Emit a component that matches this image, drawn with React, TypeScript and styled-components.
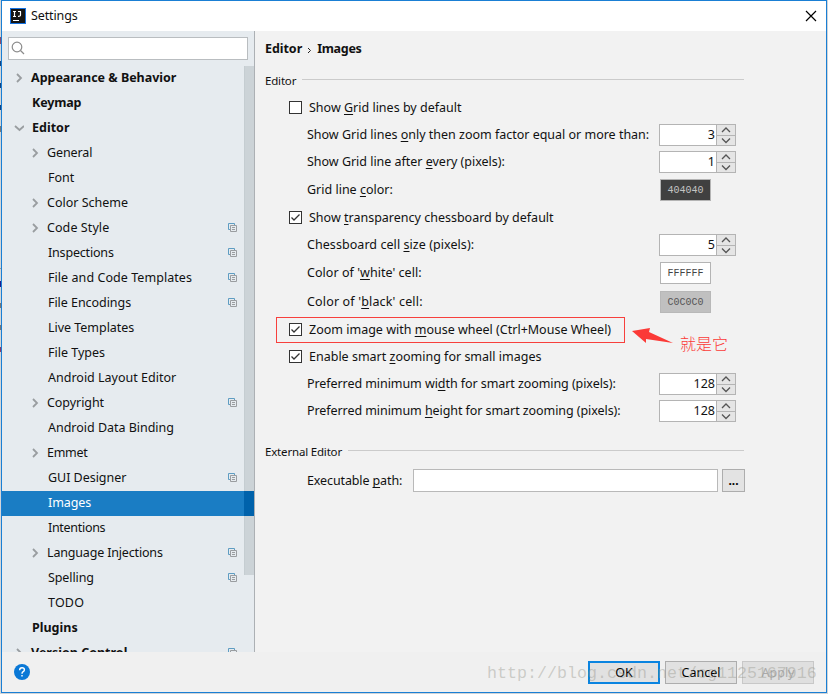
import React from 'react';
import styled, { createGlobalStyle, css } from 'styled-components';

const Global = createGlobalStyle`
  * { box-sizing: border-box; }
  body {
    margin: 0;
    overflow: hidden;
    background: linear-gradient(
      #d4d6d8 37px, #8a4a6a 37px 44px, #d4d6d8 44px 61px,
      #14427e 61px 66px, #d4d6d8 66px 83px, #14427e 83px 88px, #d4d6d8 88px 105px,
      #14427e 105px 110px, #d4d6d8 110px 126px, #777 126px 132px, #d4d6d8 132px 268px,
      #999 268px 269px, #d4d6d8 269px 281px, #1b1b8c 281px 287px, #d4d6d8 287px 303px,
      #777 303px 308px, #d4d6d8 308px 325px, #777 325px 330px, #d4d6d8 330px 347px,
      #8a3a6a 347px 352px, #d4d6d8 352px
    ) 0 0 / 1px 694px no-repeat #d0d4d8;
  }
`;

const Window = styled.div`
  width: 826px;
  height: 693px;
  margin-left: 1px;
  border: 1px solid #1a7fd4;
  background: #f2f2f2;
  display: flex;
  flex-direction: column;
  font: 12.5px/20px 'Noto Sans', 'Noto Sans CJK SC', sans-serif;
  color: #111;
  position: relative;
  white-space: pre;
`;

const TitleBar = styled.header`
  height: 30px;
  flex: none;
  background: #fff;
  display: flex;
  align-items: center;
  padding: 0 9px 0 8px;
  svg { display: block; }
`;

const Title = styled.span`
  margin-left: 5px;
  flex: 1;
  letter-spacing: -0.12px;
`;

const CloseIcon = styled.svg`
  margin-top: -1px;
`;

const Body = styled.div`
  flex: 1;
  min-height: 0;
  display: flex;
`;

const Sidebar = styled.aside`
  width: 253px;
  flex: none;
  background: #e6ebef;
  border-right: 1px solid #acb0b4;
  display: flex;
  flex-direction: column;
`;

const Search = styled.div`
  width: 240px;
  height: 23px;
  flex: none;
  margin: 6px 0 6px 6px;
  background: #fff;
  border: 1px solid #b9bdc0;
  padding: 3px 0 0 2px;
`;

const TreeArea = styled.div`
  flex: 1;
  min-height: 0;
  overflow: hidden;
  position: relative;
`;

const Thumb = styled.div`
  position: absolute;
  top: 0;
  right: 0;
  width: 10px;
  height: 509px;
  background: rgba(0, 20, 30, 0.11);
  border-left: 1px solid rgba(0, 20, 30, 0.03);
`;

const SelectedThumb = styled.div`
  margin-left: auto;
  width: 10px;
  height: 25px;
  background: #0062ab;
`;

const TreeRow = styled.div<{ $level: number; $selected?: boolean }>`
  height: 25px;
  display: flex;
  align-items: center;
  padding-left: ${p => (p.$level ? 28 : 12)}px;
  ${p => !p.$level && css`font-weight: 700;`}
  ${p => p.$selected && css`
    background: #1a7dc4;
    color: #fff;
    position: relative;
    z-index: 1;
  `}
`;

const TreeIcon = styled.span`
  width: 10px;
  height: 12px;
  flex: none;
  svg { display: block; }
`;

const TreeLabel = styled.span<{ $gap: number; $track: number }>`
  margin-left: ${p => p.$gap}px;
  height: 22px;
  letter-spacing: ${p => p.$track}px;
`;

const CopyMark = styled.svg`
  margin: 0 16px 2px auto;
  flex: none;
`;

const Main = styled.main`
  flex: 1;
  padding: 8px 0 0 10px;
`;

const Breadcrumb = styled.h1`
  margin: 0;
  height: 20px;
  font-size: 12.5px;
  line-height: 20px;
  font-weight: 700;
  display: flex;
  gap: 5px;
`;

const Crumb = styled.span<{ $track: number }>`
  letter-spacing: ${p => p.$track}px;
`;

const Chevron = styled.svg`
  margin-top: 8px;
`;

const SectionHead = styled.div<{ $top: number }>`
  display: flex;
  width: 479px;
  height: 20px;
  margin-top: ${p => p.$top}px;
  font-size: 11.5px;
  letter-spacing: -0.18px;
  &::after {
    content: '';
    flex: 1;
    height: 1px;
    margin: 8px 0 0 6px;
    background: #cbcbcb;
  }
`;

const CheckRow = styled.label<{ $top: number }>`
  display: flex;
  align-items: center;
  height: 13px;
  margin: ${p => p.$top}px 0 0 24px;
  gap: 7px;
`;

const Highlight = styled.div`
  width: 349px;
  height: 26px;
  margin: 4px 0 0 11px;
  border: 1px solid #f7403d;
  ${CheckRow} { margin: 5px 0 0 12px; }
`;

const Box = styled.span`
  width: 13px;
  height: 13px;
  flex: none;
  border: 1px solid #333;
  background: #fff;
  svg { display: block; }
`;

const FieldRow = styled.div<{ $top: number; $height?: number }>`
  display: flex;
  align-items: center;
  height: ${p => p.$height ?? 22}px;
  margin: ${p => p.$top}px 0 0 42px;
`;

const FieldLabel = styled.span<{ $width?: number; $track: number }>`
  width: ${p => p.$width ?? 352}px;
  flex: none;
  letter-spacing: ${p => p.$track}px;
`;

const Mnemonic = styled.u`
  text-decoration-thickness: 1px;
  text-underline-offset: 2px;
  text-decoration-skip-ink: none;
`;

const Spinner = styled.div`
  width: 77px;
  height: 22px;
  display: flex;
  border: 1px solid #b4b4b4;
  background: #fff;
`;

const SpinValue = styled.span`
  flex: 1;
  text-align: right;
  padding-right: 1px;
  line-height: 19px;
`;

const SpinButtons = styled.div`
  width: 19px;
  border-left: 1px solid #b4b4b4;
  background: #e5e5e5;
  svg { display: block; }
`;

const Swatch = styled.div<{ $bg: string; $fg: string; $edge: string }>`
  width: 51px;
  height: 22px;
  margin-left: 1px;
  border: 1px solid ${p => p.$edge};
  background: ${p => p.$bg};
  color: ${p => p.$fg};
  font: 10px/22px 'Liberation Mono', monospace;
  text-align: center;
`;

const PathInput = styled.div`
  width: 305px;
  height: 23px;
  border: 1px solid #b9b9b9;
  background: #fff;
`;

const BrowseButton = styled.button`
  width: 23px;
  height: 23px;
  margin-left: 4px;
  padding: 0;
  border: 1px solid #adadad;
  background: #e3e3e3;
  font: 700 12px/20px 'Noto Sans', sans-serif;
`;

const Footer = styled.footer`
  height: 40px;
  flex: none;
  background: #f0f0f0;
  display: flex;
  gap: 5px;
  padding: 9px 12px 0 12px;
`;

const Help = styled.svg`
  margin-right: auto;
  margin-top: 3px;
`;

const Button = styled.button<{ $kind?: 'primary' | 'disabled' }>`
  width: 72px;
  height: 23px;
  padding: 0;
  background: #e1e1e1;
  border: 1px solid #adadad;
  color: #000;
  font: 12.5px/18px 'Noto Sans', sans-serif;
  ${p => p.$kind === 'primary' && css`border: 2px solid #0a84e0;`}
  ${p => p.$kind === 'disabled' && css`
    background: #dfdfdf;
    border-color: #c8c8c8;
    color: #aaa;
  `}
`;

const Watermark = styled.div`
  position: absolute;
  left: 485px;
  top: 661px;
  font: 16.67px/24px 'Liberation Mono', monospace;
  color: rgba(150, 150, 140, 0.42);
`;

const Arrow = styled.svg`
  position: absolute;
  left: 629px;
  top: 325px;
`;

const Note = styled.div`
  position: absolute;
  left: 678px;
  top: 330px;
  font: 300 16px/24px 'Noto Sans CJK SC', sans-serif;
  color: #fb3a37;
`;

type Node = { t: string; level?: number; arrow?: 'r' | 'd'; copy?: boolean; track?: number };

const tree: Node[] = [
  { t: 'Appearance & Behavior', level: 0, arrow: 'r', track: -0.02 },
  { t: 'Keymap', level: 0, track: -0.15 },
  { t: 'Editor', level: 0, arrow: 'd' },
  { t: 'General', arrow: 'r', track: -0.12 },
  { t: 'Font' },
  { t: 'Color Scheme', arrow: 'r' },
  { t: 'Code Style', arrow: 'r', copy: true, track: 0.08 },
  { t: 'Inspections', copy: true, track: -0.18 },
  { t: 'File and Code Templates', copy: true, track: 0.06 },
  { t: 'File Encodings', copy: true, track: -0.05 },
  { t: 'Live Templates', track: -0.03 },
  { t: 'File Types' },
  { t: 'Android Layout Editor' },
  { t: 'Copyright', arrow: 'r', copy: true, track: -0.06 },
  { t: 'Android Data Binding', track: -0.02 },
  { t: 'Emmet', arrow: 'r', track: -0.3 },
  { t: 'GUI Designer', copy: true, track: -0.03 },
  { t: 'Images', track: -0.1 },
  { t: 'Intentions', track: -0.3 },
  { t: 'Language Injections', arrow: 'r', copy: true, track: -0.17 },
  { t: 'Spelling', copy: true, track: -0.1 },
  { t: 'TODO', track: 0.2 },
  { t: 'Plugins', level: 0 },
  { t: 'Version Control', level: 0, arrow: 'r', copy: true },
];

function TreeItem({ node }: { node: Node }) {
  const level = node.level ?? 1;
  const selected = node.t === 'Images';
  return (
    <TreeRow $level={level} $selected={selected}>
      <TreeIcon>
        {node.arrow && (
          <svg width="10" height="10" fill="none" stroke="#999da0" strokeWidth="1.8">
            <path d={node.arrow === 'r' ? 'M3 1L7 5L3 9' : 'M1 3L5.5 7L10 3'} />
          </svg>
        )}
      </TreeIcon>
      <TreeLabel $gap={node.arrow === 'r' ? 7 : 8} $track={node.track ?? 0}>{node.t}</TreeLabel>
      {node.copy && (
        <CopyMark width="10" height="10" fill="none">
          <path d="M2 6.5H.5V.5H6.5V2" stroke="#5f9dc2" />
          <path d="M2.5 2.5H8.5V8.5H2.5ZM4 4.5H7M4 6.5H7" stroke="#9a9da0" />
        </CopyMark>
      )}
      {selected && <SelectedThumb />}
    </TreeRow>
  );
}

/** Splits a label at "_" and underlines the letter that follows it. */
function Mnemo({ text }: { text: string }) {
  const i = text.indexOf('_');
  if (i < 0) return <>{text}</>;
  return <>{text.slice(0, i)}<Mnemonic>{text[i + 1]}</Mnemonic>{text.slice(i + 2)}</>;
}

function Check({ text, top = 0, on }: { text: string; top?: number; on?: boolean }) {
  return (
    <CheckRow $top={top}>
      <Box>
        {on && (
          <svg width="11" height="11" fill="none" stroke="#333" strokeWidth="1.3">
            <path d="M1.5 5.5L4 8L9.5 2.5" />
          </svg>
        )}
      </Box>
      <span><Mnemo text={text} /></span>
    </CheckRow>
  );
}

function SpinField({ text, top, value, track = 0 }: { text: string; top: number; value: number; track?: number }) {
  return (
    <FieldRow $top={top}>
      <FieldLabel $track={track}><Mnemo text={text} /></FieldLabel>
      <Spinner>
        <SpinValue>{value}</SpinValue>
        <SpinButtons>
          <svg width="18" height="20" fill="none" stroke="#555" strokeWidth="1.3">
            <path d="M0 10.5H18" stroke="#b4b4b4" strokeWidth="1" />
            <path d="M5 7L9 3L13 7M5 13.5L9 17.5L13 13.5" />
          </svg>
        </SpinButtons>
      </Spinner>
    </FieldRow>
  );
}

function ColorField({ text, top, bg, fg, edge, track = 0 }: { text: string; top: number; bg: string; fg: string; edge: string; track?: number }) {
  return (
    <FieldRow $top={top}>
      <FieldLabel $track={track}><Mnemo text={text} /></FieldLabel>
      <Swatch $bg={'#' + bg} $fg={fg} $edge={edge}>{bg}</Swatch>
    </FieldRow>
  );
}

export default function App() {
  return (
    <>
      <Global />
      <Window>
        <TitleBar>
          <svg width="16" height="16" fill="none">
            <rect x=".5" y=".5" width="15" height="15" fill="#151515" stroke="#1672e0" />
            <path d="M3 3.5H6M4.5 3.5V8M3 8.5H6M8 3.5H11M10.5 3.5V7Q10.5 8.5 8 8.3" stroke="#fff" strokeWidth="1.2" />
            <path d="M3 12.5H9" stroke="#fff" />
          </svg>
          <Title>Settings</Title>
          <CloseIcon width="12" height="12" fill="none" stroke="#000" strokeWidth="1.2">
            <path d="M1 1L11 11M11 1L1 11" />
          </CloseIcon>
        </TitleBar>
        <Body>
          <Sidebar>
            <Search>
              <svg width="15" height="15" fill="none" stroke="#8c8c8c" strokeWidth="1.2">
                <circle cx="6" cy="6" r="4.8" />
                <path d="M9.5 9.5L13 13" />
              </svg>
            </Search>
            <TreeArea>
              <Thumb />
              {tree.map(n => <TreeItem key={n.t} node={n} />)}
            </TreeArea>
          </Sidebar>
          <Main>
            <Breadcrumb>
              <Crumb $track={-0.05}>Editor</Crumb>
              <Chevron width="5" height="8" fill="none" stroke="#222"><path d="M1 1L3.5 3.5L1 6" /></Chevron>
              <Crumb $track={-0.3}>Images</Crumb>
            </Breadcrumb>
            <SectionHead $top={12}>Editor</SectionHead>
            <Check top={10} text="Show _Grid lines by default" />
            <SpinField top={10} text="Show Grid lines _only then zoom factor equal or more than:" value={3} track={-0.01} />
            <SpinField top={5} text="Show Grid line after _every (pixels):" value={1} track={-0.02} />
            <ColorField top={6} text="Grid line _color:" bg="404040" fg="#c4c4c4" edge="#b4b4b4" />
            <Check top={10} on text="Show _transparency chessboard by default" />
            <SpinField top={10} text="Chessboard cell _size (pixels):" value={5} track={0.06} />
            <ColorField top={6} text="Color of '_white' cell:" bg="FFFFFF" fg="#444" edge="#b4b4b4" track={0.04} />
            <ColorField top={7} text="Color of '_black' cell:" bg="C0C0C0" fg="#555" edge="#b8b8b8" track={0.16} />
            <Highlight>
              <Check on text="Zoom image with _mouse wheel (Ctrl+Mouse Wheel)" />
            </Highlight>
            <Check top={7} on text="Enable smart _zooming for small images" />
            <SpinField top={10} text="Preferred minimum wi_dth for smart zooming (pixels):" value={128} track={-0.07} />
            <SpinField top={5} text="Preferred minimum _height for smart zooming (pixels):" value={128} track={-0.07} />
            <SectionHead $top={20}>External Editor</SectionHead>
            <FieldRow $top={7} $height={23}>
              <FieldLabel $width={106} $track={-0.12}><Mnemo text="Executable _path:" /></FieldLabel>
              <PathInput />
              <BrowseButton>...</BrowseButton>
            </FieldRow>
          </Main>
        </Body>
        <Footer>
          <Help width="16" height="16">
            <circle cx="8" cy="8" r="8" fill="#0a78d6" />
            <path d="M5.6 6.2Q5.7 3.7 8 3.7Q10.4 3.7 10.4 5.8Q10.4 7 9.2 7.7Q8 8.4 8 9.7M8 11V12.6" fill="none" stroke="#fff" strokeWidth="1.4" />
          </Help>
          <Button $kind="primary">OK</Button>
          <Button>Cancel</Button>
          <Button $kind="disabled">Apply</Button>
        </Footer>
        <Arrow width="44" height="20"><path d="M1 5L19 2L18 6L42 17L15 13L15 17Z" fill="#fb3a37" /></Arrow>
        <Note>就是它</Note>
        <Watermark>http://blog.csdn.net/cg1125167916</Watermark>
      </Window>
    </>
  );
}
